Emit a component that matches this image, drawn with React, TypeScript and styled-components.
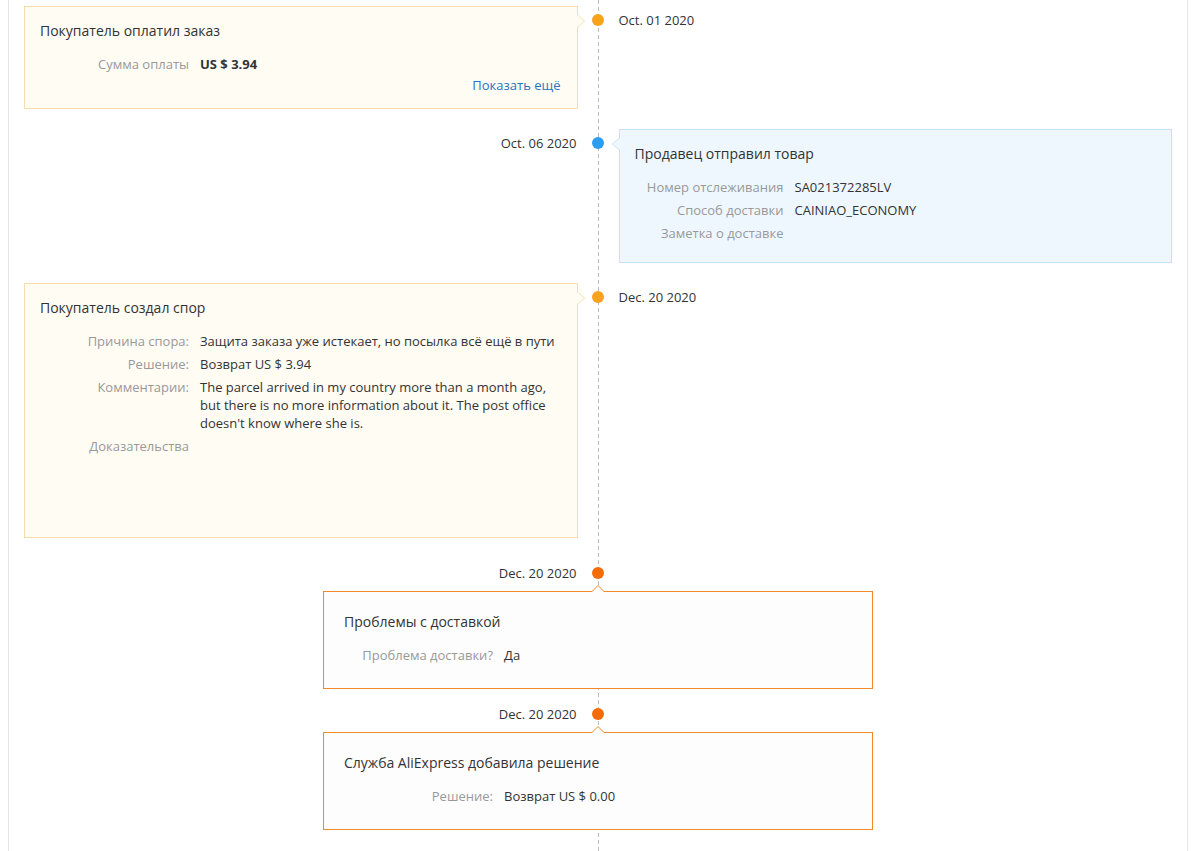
import React from 'react';
import styled, { createGlobalStyle, css } from 'styled-components';

type Tone = 'yellow' | 'blue' | 'orange';
type Side = 'left' | 'right';

const tones: Record<Tone, { bg: string; border: string; dot: string }> = {
  yellow: { bg: '#fffcf4', border: '#f7dea9', dot: '#f9a21e' },
  blue: { bg: '#eef7fe', border: '#c6e2f5', dot: '#2d9df1' },
  orange: { bg: '#fdfdfd', border: '#ef8a2a', dot: '#f56b06' },
};

const GlobalStyle = createGlobalStyle`
  html, body {
    margin: 0;
    background: #fff;
    font-family: "Open Sans", "Noto Sans", Arial, sans-serif;
    color: #333;
  }
`;

const Frame = styled.div`
  margin-left: 8px;
  width: 1180px;
  min-height: 100vh;
  box-sizing: border-box;
  border-left: 1px solid #e6e6e6;
  border-right: 1px solid #e6e6e6;
  padding: 6px 15px 0;
  overflow: hidden;
`;

const Timeline = styled.div`
  position: relative;
  display: flex;
  flex-direction: column;

  &::before {
    content: '';
    position: absolute;
    top: -6px;
    bottom: 0;
    left: 50%;
    width: 1px;
    background: repeating-linear-gradient(to bottom, #bdbdbd 0 4px, transparent 4px 7px);
  }
`;

const Entry = styled.div<{ $offset: number }>`
  position: relative;
  display: grid;
  grid-template-columns: 1fr 41px 1fr;
  align-items: start;
  margin-top: ${(p) => p.$offset}px;
`;

const Dot = styled.span<{ $tone: Tone }>`
  grid-column: 2;
  grid-row: 1;
  justify-self: center;
  width: 12px;
  height: 12px;
  margin-top: 8px;
  border-radius: 50%;
  background: ${(p) => tones[p.$tone].dot};
  z-index: 1;
`;

const CenterDot = styled(Dot)`
  margin-top: 3px;
`;

const DateText = styled.div<{ $side: Side }>`
  grid-row: 1;
  font-size: 13px;
  line-height: 18px;
  margin-top: 5px;
  color: #333;
  ${(p) =>
    p.$side === 'left'
      ? css`
          grid-column: 1;
          text-align: right;
          padding-right: 1px;
        `
      : css`
          grid-column: 3;
          text-align: left;
        `}
`;

const CenterDate = styled(DateText)`
  margin-top: 0;
`;

const Card = styled.div<{ $tone: Tone; $side?: Side }>`
  position: relative;
  grid-row: 1;
  box-sizing: border-box;
  background: ${(p) => tones[p.$tone].bg};
  border: 1px solid ${(p) => tones[p.$tone].border};
  padding: 14px 15px 14px;
  grid-column: ${(p) => (p.$side === 'left' ? 1 : 3)};

  &::before,
  &::after {
    content: '';
    position: absolute;
    top: 7px;
    border-top: 7px solid transparent;
    border-bottom: 7px solid transparent;
  }

  ${(p) =>
    p.$side === 'left'
      ? css`
          &::before {
            right: -8px;
            border-left: 8px solid ${tones[p.$tone].border};
          }
          &::after {
            right: -7px;
            border-left: 8px solid ${tones[p.$tone].bg};
          }
        `
      : css`
          &::before {
            left: -8px;
            border-right: 8px solid ${tones[p.$tone].border};
          }
          &::after {
            left: -7px;
            border-right: 8px solid ${tones[p.$tone].bg};
          }
        `}
`;

const WideCard = styled.div<{ $tone: Tone }>`
  position: relative;
  grid-column: 1 / -1;
  grid-row: 2;
  justify-self: center;
  width: 550px;
  margin-top: 9px;
  box-sizing: border-box;
  background: ${(p) => tones[p.$tone].bg};
  border: 1px solid ${(p) => tones[p.$tone].border};
  padding: 20px 20px 18px;

  &::before,
  &::after {
    content: '';
    position: absolute;
    left: 50%;
    transform: translateX(-50%);
    border-left: 7px solid transparent;
    border-right: 7px solid transparent;
  }
  &::before {
    top: -7px;
    border-bottom: 7px solid ${(p) => tones[p.$tone].border};
  }
  &::after {
    top: -6px;
    border-bottom: 7px solid ${(p) => tones[p.$tone].bg};
  }
`;

const Title = styled.div`
  font-size: 14px;
  line-height: 20px;
  color: #333;
  margin-bottom: 14px;
`;

const Fields = styled.dl`
  display: grid;
  grid-template-columns: 149px 1fr;
  column-gap: 11px;
  row-gap: 5px;
  margin: 0 0 6px;
  font-size: 13px;
  line-height: 18px;
`;

const Label = styled.dt`
  color: #999;
  text-align: right;
  white-space: nowrap;
`;

const Value = styled.dd<{ $strong?: boolean; $tall?: boolean }>`
  margin: 0;
  color: #333;
  font-weight: ${(p) => (p.$strong ? 700 : 400)};
  min-height: ${(p) => (p.$tall ? '80px' : '18px')};
`;

const MoreLink = styled.a`
  display: block;
  margin-top: -3px;
  padding-right: 1px;
  text-align: right;
  font-size: 13px;
  line-height: 18px;
  color: #2b72c2;
  text-decoration: none;
  cursor: pointer;
`;

export default function App() {
  return (
    <>
      <GlobalStyle />
      <Frame>
        <Timeline>
          <Entry $offset={0}>
            <Card $tone="yellow" $side="left">
              <Title>Покупатель оплатил заказ</Title>
              <Fields>
                <Label>Сумма оплаты</Label>
                <Value $strong>US $ 3.94</Value>
              </Fields>
              <MoreLink>Показать ещё</MoreLink>
            </Card>
            <Dot $tone="yellow" />
            <DateText $side="right">Oct. 01 2020</DateText>
          </Entry>

          <Entry $offset={20}>
            <DateText $side="left">Oct. 06 2020</DateText>
            <Dot $tone="blue" />
            <Card $tone="blue" $side="right">
              <Title>Продавец отправил товар</Title>
              <Fields>
                <Label>Номер отслеживания</Label>
                <Value>SA021372285LV</Value>
                <Label>Способ доставки</Label>
                <Value>CAINIAO_ECONOMY</Value>
                <Label>Заметка о доставке</Label>
                <Value />
              </Fields>
            </Card>
          </Entry>

          <Entry $offset={20}>
            <Card $tone="yellow" $side="left">
              <Title>Покупатель создал спор</Title>
              <Fields>
                <Label>Причина спора:</Label>
                <Value>Защита заказа уже истекает, но посылка всё ещё в пути</Value>
                <Label>Решение:</Label>
                <Value>Возврат US $ 3.94</Value>
                <Label>Комментарии:</Label>
                <Value>
                  The parcel arrived in my country more than a month ago, but there is no more
                  information about it. The post office doesn't know where she is.
                </Value>
                <Label>Доказательства</Label>
                <Value $tall />
              </Fields>
            </Card>
            <Dot $tone="yellow" />
            <DateText $side="right">Dec. 20 2020</DateText>
          </Entry>

          <Entry $offset={26}>
            <CenterDate $side="left">Dec. 20 2020</CenterDate>
            <CenterDot $tone="orange" />
            <WideCard $tone="orange">
              <Title>Проблемы с доставкой</Title>
              <Fields>
                <Label>Проблема доставки?</Label>
                <Value>Да</Value>
              </Fields>
            </WideCard>
          </Entry>

          <Entry $offset={16}>
            <CenterDate $side="left">Dec. 20 2020</CenterDate>
            <CenterDot $tone="orange" />
            <WideCard $tone="orange">
              <Title>Служба AliExpress добавила решение</Title>
              <Fields>
                <Label>Решение:</Label>
                <Value>Возврат US $ 0.00</Value>
              </Fields>
            </WideCard>
          </Entry>

          <Entry $offset={18}>
            <CenterDot $tone="orange" />
          </Entry>
        </Timeline>
      </Frame>
    </>
  );
}
